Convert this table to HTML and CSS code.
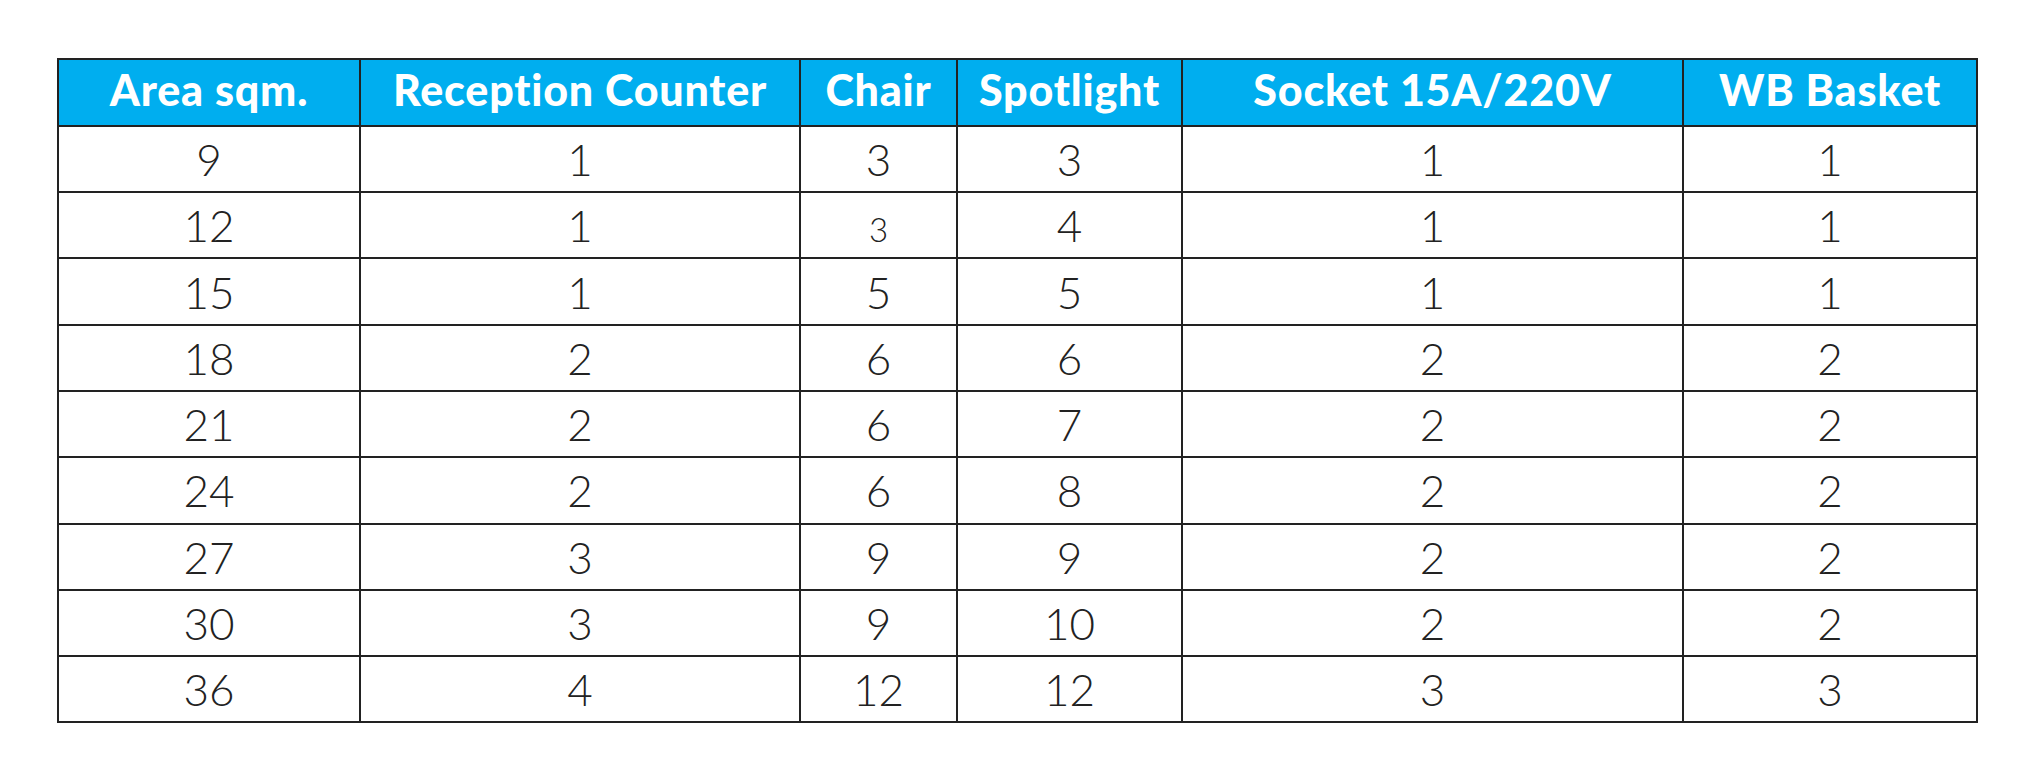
FILE: index.html
```html
<!DOCTYPE html>
<html>
<head>
<meta charset="utf-8">
<link rel="stylesheet" href="styles.css">
</head>
<body>
<div class="page">
<table class="spec">
<colgroup>
<col class="c1"><col class="c2"><col class="c3"><col class="c4"><col class="c5"><col class="c6">
</colgroup>
<thead>
<tr><th>Area sqm.</th><th>Reception Counter</th><th>Chair</th><th>Spotlight</th><th>Socket 15A/220V</th><th>WB Basket</th></tr>
</thead>
<tbody>
<tr><td>9</td><td>1</td><td>3</td><td>3</td><td>1</td><td>1</td></tr>
<tr><td>12</td><td>1</td><td><span class="small">3</span></td><td>4</td><td>1</td><td>1</td></tr>
<tr><td>15</td><td>1</td><td>5</td><td>5</td><td>1</td><td>1</td></tr>
<tr><td>18</td><td>2</td><td>6</td><td>6</td><td>2</td><td>2</td></tr>
<tr><td>21</td><td>2</td><td>6</td><td>7</td><td>2</td><td>2</td></tr>
<tr><td>24</td><td>2</td><td>6</td><td>8</td><td>2</td><td>2</td></tr>
<tr><td>27</td><td>3</td><td>9</td><td>9</td><td>2</td><td>2</td></tr>
<tr><td>30</td><td>3</td><td>9</td><td>10</td><td>2</td><td>2</td></tr>
<tr><td>36</td><td>4</td><td>12</td><td>12</td><td>3</td><td>3</td></tr>
</tbody>
</table>
</div>
</body>
</html>
```
FILE: styles.css
```css
html, body {
  margin: 0;
  padding: 0;
  background: #ffffff;
}
.page {
  padding: 58px 0 0 57px;
}
.spec {
  border-collapse: collapse;
  table-layout: fixed;
  width: 1919px;
  font-family: "Lato", "Liberation Sans", sans-serif;
}
.c1 { width: 302px; }
.c2 { width: 440px; }
.c3 { width: 157px; }
.c4 { width: 225px; }
.c5 { width: 501px; }
.c6 { width: 294px; }
.spec th, .spec td {
  border: 2.5px solid #222222;
  text-align: center;
  vertical-align: middle;
  padding: 0;
  height: 64.3px;
}
.spec th {
  background: #00aeef;
  color: #ffffff;
  font-weight: 900;
  font-size: 43px;
  letter-spacing: 0.8px;
  line-height: 1;
  padding-bottom: 5px;
  height: 59.8px;
}
.spec td {
  color: #222222;
  font-weight: 300;
  font-size: 44px;
  line-height: 1;
}
.small {
  font-size: 33px;
}
```
